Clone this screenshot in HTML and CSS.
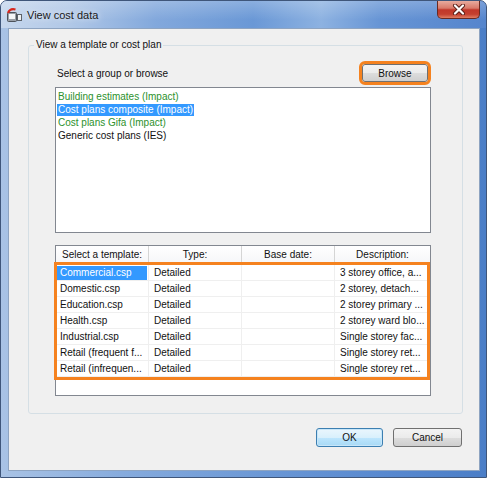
FILE: index.html
```html
<!DOCTYPE html>
<html lang="en">
<head>
  <meta charset="UTF-8" />
  <title>View cost data</title>
  <link rel="stylesheet" href="styles.css">
</head>
<body>

  <div class="window">
    <div class="titlebar">
      <svg class="app-icon" width="17" height="16" viewBox="0 0 17 16">
        <rect x="1.5" y="5.5" width="9" height="9" rx="1" fill="#9aa0a8" stroke="#4d535b" />
        <rect x="3" y="7" width="6" height="5" fill="#f4f6f8" />
        <path d="M2 6 Q4 1 9.5 2.5" fill="none" stroke="#d8261c" stroke-width="2.2" />
        <rect x="11.5" y="7.5" width="4" height="6" fill="#eceff2" stroke="#5b6169" />
      </svg>
      <span class="title">View cost data</span>
      <button class="close-btn" aria-label="Close">
        <svg width="14" height="11" viewBox="0 0 14 11">
          <path d="M3 1.5 L11 9.5 M11 1.5 L3 9.5" stroke="#5a1d16" stroke-width="4" stroke-linecap="round" />
          <path d="M3 1.5 L11 9.5 M11 1.5 L3 9.5" stroke="#fff" stroke-width="2.2" stroke-linecap="round" />
        </svg>
      </button>
    </div>

    <div class="client">
      <fieldset class="group">
        <legend>View a template or cost plan</legend>

        <div class="browse-row">
          <span class="browse-label">Select a group or browse</span>
          <button class="btn browse">Browse</button>
        </div>

        <ul class="group-list">
          <li class="impact"><span>Building estimates (Impact)</span></li>
          <li class="impact selected"><span>Cost plans composite (Impact)</span></li>
          <li class="impact"><span>Cost plans Gifa (Impact)</span></li>
          <li><span>Generic cost plans (IES)</span></li>
        </ul>

        <div class="template-table">
          <table>
            <thead>
              <tr>
                <th class="narrow">Select a template:</th>
                <th class="narrow">Type:</th>
                <th class="narrow">Base date:</th>
                <th>Description:</th>
              </tr>
            </thead>
            <tbody>
              <tr class="current">
                <td class="name"><span>Commercial.csp</span></td>
                <td>Detailed</td>
                <td></td>
                <td>3 storey office, a...</td>
              </tr>
              <tr>
                <td class="name"><span>Domestic.csp</span></td>
                <td>Detailed</td>
                <td></td>
                <td>2 storey, detach...</td>
              </tr>
              <tr>
                <td class="name"><span>Education.csp</span></td>
                <td>Detailed</td>
                <td></td>
                <td>2 storey primary ...</td>
              </tr>
              <tr>
                <td class="name"><span>Health.csp</span></td>
                <td>Detailed</td>
                <td></td>
                <td>2 storey ward blo...</td>
              </tr>
              <tr>
                <td class="name"><span>Industrial.csp</span></td>
                <td>Detailed</td>
                <td></td>
                <td>Single storey fac...</td>
              </tr>
              <tr>
                <td class="name"><span>Retail (frequent f...</span></td>
                <td>Detailed</td>
                <td></td>
                <td>Single storey ret...</td>
              </tr>
              <tr>
                <td class="name"><span>Retail (infrequen...</span></td>
                <td>Detailed</td>
                <td></td>
                <td>Single storey ret...</td>
              </tr>
            </tbody>
          </table>
          <!-- highlight frame around the template rows -->
          <div class="callout"></div>
        </div>
      </fieldset>

      <div class="actions">
        <button class="btn ok">OK</button>
        <button class="btn cancel">Cancel</button>
      </div>
    </div>
  </div>

</body>
</html>
```

FILE: styles.css
```css
body {
  margin: 0;
  font-family: "Liberation Sans", Arial, sans-serif;
  font-size: 10px;
  color: #111;
  background: #fff;
}

/* Window frame */
.window {
  box-sizing: border-box;
  width: 487px;
  height: 478px;
  display: flex;
  flex-direction: column;
  border: 1px solid #3f567a;
  border-radius: 7px 7px 0 0;
  overflow: hidden;
  background: linear-gradient(to right, #a9c3e5 0%, #86abdd 25%, #6a97d5 55%, #5788cf 80%, #4b7ec7 100%);
}
.titlebar {
  height: 27px;
  display: flex;
  align-items: center;
  padding-left: 5px;
  background:
    linear-gradient(to bottom, rgba(255, 255, 255, 0.22), rgba(255, 255, 255, 0) 70%),
    linear-gradient(to right, #c6d7ed 0%, #b1c8e7 14%, #82a8dc 32%, #6a98d6 52%, #8db2e1 66%, #6795d5 78%, #5585cd 100%);
}
.app-icon {
  display: block;
}
.title {
  margin-left: 4px;
  font-size: 11px;
  color: #1a1a1a;
  text-shadow: 0 0 6px rgba(255, 255, 255, 0.9);
}
.close-btn {
  align-self: flex-start;
  margin-left: auto;
  margin-right: 6px;
  width: 43px;
  height: 18px;
  padding: 0;
  border: 1px solid #6a2a22;
  border-top: none;
  border-radius: 0 0 5px 5px;
  background: linear-gradient(to bottom, #e8ab9e 0%, #d97a6a 42%, #c1372a 52%, #c4402f 78%, #e07d63 100%);
  display: flex;
  align-items: center;
  justify-content: center;
}

/* Dialog body */
.client {
  flex: 1;
  margin: 0 6px 6px 7px;
  background: #f0f0f0;
  border: 1px solid #8ea4c1;
  display: flex;
  flex-direction: column;
}
.group {
  margin: 10px 16px 0 19px;
  padding: 13px 31px 17px 26px;
  border: 1px solid #d5dfe5;
  border-radius: 3px;
  min-width: 0;
}
.group legend {
  margin-left: -21px;
  padding: 0 2px;
  line-height: 12px;
}
.browse-row {
  display: flex;
  justify-content: space-between;
  align-items: center;
  height: 18px;
}
.browse-label {
  padding-left: 2px;
}

/* Buttons */
.btn {
  font: inherit;
  color: #111;
  height: 19px;
  padding: 0;
  border: 1px solid #707070;
  border-radius: 3px;
  background: linear-gradient(to bottom, #f3f3f3 0%, #ebebeb 50%, #dddddd 51%, #cfcfcf 100%);
}
.browse {
  width: 66px;
  height: 18px;
  margin-right: 3px;
  outline: 3px solid #f5821f;
}
.ok {
  width: 67px;
  border-color: #3c7fb1;
  background: linear-gradient(to bottom, #eaf6fd 0%, #d9f0fc 50%, #bee6fd 51%, #a7d9f5 100%);
  box-shadow: inset 0 0 0 1px #c8e6f9;
}
.cancel {
  width: 69px;
}
.actions {
  display: flex;
  justify-content: flex-end;
  gap: 10px;
  margin: 14px 17px 0 0;
}

/* Group list */
.group-list {
  list-style: none;
  margin: 5px 0 0;
  padding: 2px 1px;
  height: 146px;
  box-sizing: border-box;
  border: 1px solid #828790;
  background: #fff;
}
.group-list li {
  line-height: 13px;
}
.group-list span {
  display: inline-block;
  padding: 0 1px;
}
.impact {
  color: #2c912c;
}
.group-list .selected span {
  line-height: 12px;
  background: #3399ff;
  color: #fff;
}

/* Template table */
.template-table {
  position: relative;
  margin-top: 12px;
  height: 151px;
  box-sizing: border-box;
  border: 1px solid #828790;
  background: #fff;
}
.template-table table {
  width: 100%;
  border-collapse: separate;
  border-spacing: 0;
  table-layout: fixed;
}
.template-table th {
  padding: 0;
  font-weight: normal;
  line-height: 18px;
  text-align: center;
  border-right: 1px solid #d5d5d5;
  border-bottom: 1px solid #d5d5d5;
  background: linear-gradient(to bottom, #ffffff, #f5f6f8);
}
.template-table th.narrow {
  width: 92px;
}
.template-table th:last-child {
  border-right: none;
}
.template-table td {
  padding: 0 0 0 5px;
  line-height: 15px;
  white-space: nowrap;
  overflow: hidden;
  border-right: 1px solid #efefef;
  border-bottom: 1px solid #efefef;
}
.template-table td:last-child {
  border-right: none;
}
.template-table td.name {
  padding: 0;
}
.template-table td.name span {
  display: block;
  margin: 1px 1px 0 1px;
  padding-left: 3px;
  line-height: 14px;
}
.template-table tr.current td.name span {
  background: #3399ff;
  color: #fff;
}
.callout {
  position: absolute;
  left: -2px;
  right: 0;
  top: 16px;
  height: 118px;
  box-sizing: border-box;
  border: 3px solid #f5821f;
  pointer-events: none;
}
```
